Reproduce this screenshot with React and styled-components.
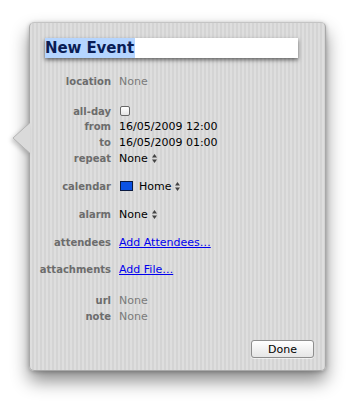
import React from "react";
import styled, { createGlobalStyle } from "styled-components";

const Global = createGlobalStyle`
  html, body {
    margin: 0;
    background: #fff;
    font-family: "DejaVu Sans", "Liberation Sans", sans-serif;
  }
`;

const Page = styled.div`
  width: 356px;
  height: 404px;
  padding: 22px 0 0 29px;
  box-sizing: border-box;
`;

const Panel = styled.div`
  position: relative;
  width: 297px;
  box-sizing: border-box;
  padding: 15px 27px 12px 0;
  border: 1px solid #a9a9a9;
  border-top-color: #c4c4c4;
  border-radius: 5px;
  background: repeating-linear-gradient(
    90deg,
    #dedede 0px,
    #dedede 2px,
    #d4d4d4 2px,
    #d4d4d4 4px
  );
  box-shadow: 0 10px 18px rgba(0, 0, 0, 0.45), 0 1px 4px rgba(0, 0, 0, 0.25);
`;

const Pointer = styled.svg`
  position: absolute;
  left: -18px;
  top: 100px;
  filter: drop-shadow(-2px 2px 2px rgba(0, 0, 0, 0.2));
`;

const TitleField = styled.div`
  margin-left: 15px;
  height: 20px;
  background: #fff;
  box-shadow: 0 2px 4px rgba(0, 0, 0, 0.55);
  display: flex;
  align-items: center;
`;

const Selected = styled.span`
  background: #b5d5ff;
  color: #0a1d55;
  font-weight: bold;
  font-size: 15px;
  line-height: 20px;
  padding: 0 1px 0 0;
  letter-spacing: -0.1px;
`;

const Row = styled.div`
  display: flex;
  align-items: center;
  height: 16px;
  margin-top: ${(p) => p.$mt || 0}px;
`;

const Label = styled.div`
  width: 81px;
  flex: none;
  text-align: right;
  font-size: 10px;
  font-weight: bold;
  color: #6c6c6c;
  white-space: nowrap;
`;

const Value = styled.div`
  margin-left: 8px;
  display: flex;
  align-items: center;
  gap: 4px;
  font-size: 11px;
  color: ${(p) => (p.$muted ? "#7a7a7a" : "#000")};
  white-space: nowrap;
`;

const Link = styled.a`
  color: #0000ee;
  text-decoration: underline;
  font-size: 11px;
  cursor: pointer;
`;

const Check = styled.span`
  display: inline-block;
  width: 8px;
  height: 8px;
  border: 1px solid #666;
  border-radius: 2px;
  background: linear-gradient(#fff, #e4e4e4);
  margin-left: 1px;
`;

const Swatch = styled.span`
  display: inline-block;
  width: 11px;
  height: 8px;
  background: #0b52e3;
  border: 1px solid #0a1a40;
  margin: 0 2px 0 1px;
`;

const Footer = styled.div`
  display: flex;
  justify-content: flex-end;
  margin-top: 16px;
  margin-right: -16px;
`;

const Button = styled.button`
  width: 63px;
  height: 18px;
  padding: 0;
  font-family: "DejaVu Sans", "Liberation Sans", sans-serif;
  font-size: 11px;
  color: #000;
  border: 1px solid #8e8e8e;
  border-radius: 3px;
  background: linear-gradient(#ffffff, #f2f2f2 50%, #e6e6e6);
  box-shadow: 0 1px 0 rgba(255, 255, 255, 0.6);
`;

function Stepper() {
  return (
    <svg width="5" height="9" viewBox="0 0 5 9">
      <path d="M2.5 0 L5 3.5 L0 3.5 Z" fill="#444" />
      <path d="M2.5 9 L5 5.5 L0 5.5 Z" fill="#444" />
    </svg>
  );
}

export default function App() {
  return (
    <Page>
      <Global />
      <Panel>
        <Pointer width="18" height="30" viewBox="0 0 18 30">
          <path d="M18 0 L1 15 L18 30 Z" fill="#dadada" />
          <path d="M17.5 0 L1 15 L17.5 30" fill="none" stroke="#b5b5b5" />
        </Pointer>
        <TitleField>
          <Selected>New Event</Selected>
        </TitleField>

        <Row $mt={15}>
          <Label>location</Label>
          <Value $muted>None</Value>
        </Row>

        <Row $mt={14}>
          <Label>all-day</Label>
          <Value><Check /></Value>
        </Row>
        <Row $mt={-1}>
          <Label>from</Label>
          <Value>16/05/2009 12:00</Value>
        </Row>
        <Row>
          <Label>to</Label>
          <Value>16/05/2009 01:00</Value>
        </Row>
        <Row>
          <Label>repeat</Label>
          <Value>None <Stepper /></Value>
        </Row>

        <Row $mt={12}>
          <Label>calendar</Label>
          <Value><Swatch />Home <Stepper /></Value>
        </Row>

        <Row $mt={12}>
          <Label>alarm</Label>
          <Value>None <Stepper /></Value>
        </Row>

        <Row $mt={12}>
          <Label>attendees</Label>
          <Value><Link>Add Attendees…</Link></Value>
        </Row>

        <Row $mt={11}>
          <Label>attachments</Label>
          <Value><Link>Add File…</Link></Value>
        </Row>

        <Row $mt={15}>
          <Label>url</Label>
          <Value $muted>None</Value>
        </Row>
        <Row>
          <Label>note</Label>
          <Value $muted>None</Value>
        </Row>

        <Footer>
          <Button>Done</Button>
        </Footer>
      </Panel>
    </Page>
  );
}
